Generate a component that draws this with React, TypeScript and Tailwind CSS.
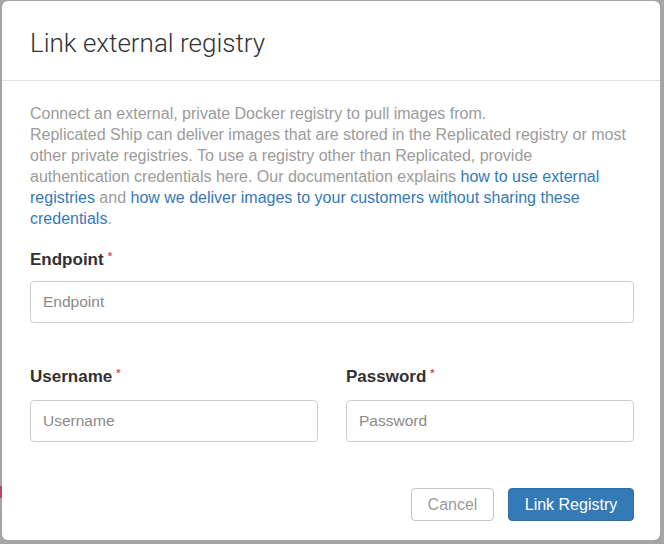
import type { ReactNode } from "react";

function Label({ children }: { children: ReactNode }) {
  return (
    <div className="flex h-5 items-start gap-1 text-[17px] font-bold leading-5 text-[#323232]">
      {children}
      <span className="text-[11px] leading-3 text-[#d9534f]">*</span>
    </div>
  );
}

function Field({ placeholder, type = "text" }: { placeholder: string; type?: string }) {
  return (
    <input
      type={type}
      placeholder={placeholder}
      className="h-[42px] w-full rounded-[4px] border border-[#cfcfcf] bg-white px-3 text-[15.5px] text-[#333] placeholder:text-[#8a8a8a] outline-none"
    />
  );
}

export default function App() {
  return (
    <div
      className="relative h-[544px] w-[664px] overflow-hidden bg-[#a5a5a5] pl-[2px] pt-[1px]"
      style={{ fontFamily: '"Liberation Sans", Arial, sans-serif' }}
    >
      <div className="absolute left-0 top-[486px] h-[12px] w-[2px] bg-[#b5475e]" />
      <div className="flex h-[539px] w-[658px] flex-col rounded-[6px] bg-white">
        <header className="flex h-[80px] items-center border-b border-[#e0e0e0] pl-[28px] pt-[5px]">
          <h1
            className="text-[26px] font-light text-[#333]"
            style={{ fontFamily: 'Roboto, "Liberation Sans", sans-serif' }}
          >
            Link external registry
          </h1>
        </header>
        <div className="flex flex-1 flex-col pl-[28px] pr-[26px] pt-[22px]">
          <p className="text-[16px] leading-[21px] text-[#9b9b9b]">
            Connect an external, private Docker registry to pull images from.
            <br />
            Replicated Ship can deliver images that are stored in the Replicated registry or most other private
            registries. To use a registry other than Replicated, provide authentication credentials here. Our
            documentation explains <a className="text-[#337ab7]">how to use external registries</a> and{" "}
            <a className="text-[#337ab7]">how we deliver images to your customers without sharing these credentials</a>.
          </p>

          <div className="mt-[21px] flex flex-col gap-[11px]">
            <Label>Endpoint</Label>
            <Field placeholder="Endpoint" />
          </div>

          <div className="mt-[44px] grid grid-cols-2 gap-[28px]">
            <div className="flex flex-col gap-[13px]">
              <Label>Username</Label>
              <Field placeholder="Username" />
            </div>
            <div className="flex flex-col gap-[13px]">
              <Label>Password</Label>
              <Field placeholder="Password" type="password" />
            </div>
          </div>

          <div className="mt-[46px] flex justify-end gap-[14px]">
            <button className="h-[33px] w-[83px] rounded-[4px] border border-[#c4c4c4] bg-white text-[16px] text-[#9b9b9b]">
              Cancel
            </button>
            <button className="h-[33px] w-[126px] rounded-[4px] border border-[#2e6da4] bg-[#337ab7] text-[16px] text-white">
              Link Registry
            </button>
          </div>
        </div>
      </div>
    </div>
  );
}
